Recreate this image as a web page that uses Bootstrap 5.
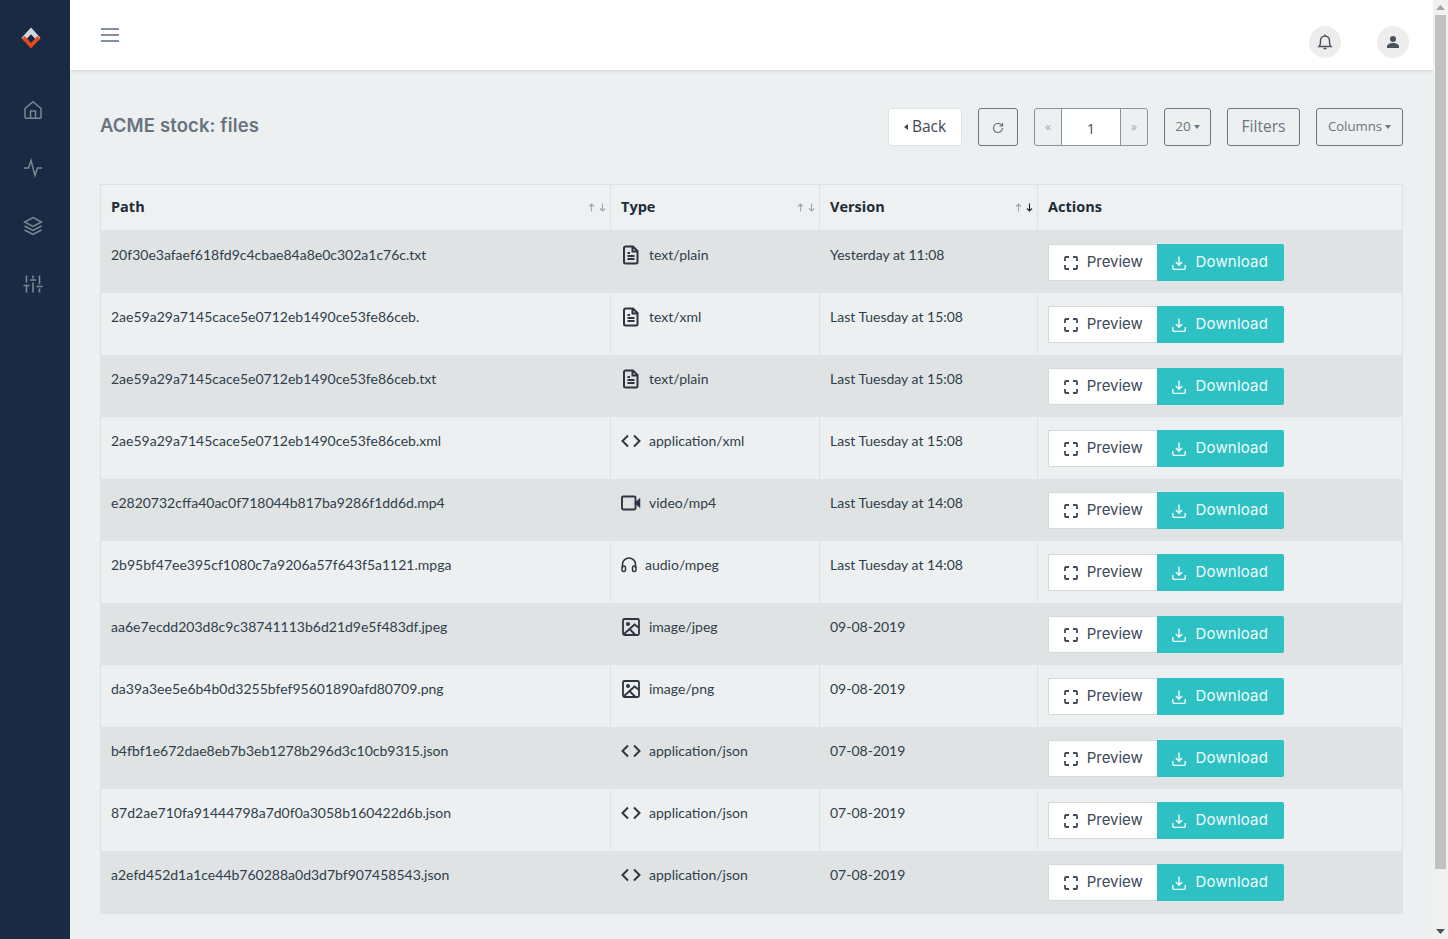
<!DOCTYPE html>
<html lang="en">
<head>
<meta charset="utf-8">
<title>ACME stock: files</title>
<link href="https://cdn.jsdelivr.net/npm/bootstrap@5.3.0/dist/css/bootstrap.min.css" rel="stylesheet">
<style>
html,body{height:100%;overflow:hidden}
body{background:#ecf0f1;font-family:"Lato","Liberation Sans",sans-serif;color:#2f3d4a;font-size:14px;margin:0}
.defs-holder{position:absolute;width:0;height:0}
.shell{height:939px}
.sidebar{width:70px;flex:0 0 70px;background:#1a2a44}
.brand{height:70px;padding:6px 9px 0 0}
.side-link{height:58px;color:#7d8795;padding-right:4px}
.side-links{padding-top:11px}
.topbar{height:70px;background:#fff;box-shadow:0 1px 3px rgba(60,70,80,.18);padding:0 24px 0 30px}
.burger{color:#5a6b7f;margin-top:26px}
.bar-btns{gap:36px;margin-top:26px}
.round-btn{width:32px;height:32px;border-radius:50%;background:#ededed;color:#49525e}
.page-body{padding:38px 30px 0 30px}
.page-title{font-family:"Inter","Open Sans",sans-serif;font-weight:600;font-size:18.5px;color:#69737f;margin:-4px 0 0;letter-spacing:.12px}
.tool-row{height:38px}
.tool{height:38px;border:1px solid #6c757d;border-radius:3px;background:transparent;color:#6c757d;font-family:"Open Sans",sans-serif;font-size:14px;padding:0;line-height:1}
.tool-back{width:74px;background:#fff;border-color:#dfe3e6;color:#3d4754;font-size:15.5px;margin-right:16px}
.tool-reload{width:40px;margin-right:16px}
.pager{width:114px;margin-right:16px;overflow:hidden;border-color:#8b939b}
.pager-arrow{width:26px;flex:none;color:#a1a8b0;font-size:12px}
.pager-num{width:60px;flex:none;background:#fff;color:#3d4754;border-left:1px solid #8b939b;border-right:1px solid #8b939b;font-size:14px;padding-top:3px}
.tool-size{width:47px;font-size:13.5px;margin-right:16px}
.tool-filters{width:73px;margin-right:16px;font-size:15.5px;padding-bottom:1px}
.tool-cols{width:87px;font-size:13.2px}
.caret-s{display:inline-block;margin-left:3px;vertical-align:2px;border-top:4px solid;border-left:3.5px solid transparent;border-right:3.5px solid transparent}
.caret-l{display:inline-block;margin-right:4px;vertical-align:2px;border-right:4px solid;border-top:3.5px solid transparent;border-bottom:3.5px solid transparent}
.files{margin:38px 0 0;width:1303px;table-layout:fixed;border-collapse:separate;border-spacing:0;--bs-table-bg:transparent;color:#2f3d4a}
.col-path{width:511px}.col-type{width:209px}.col-ver{width:218px}
.files th,.files td{border:0;border-right:1px solid #dde2e4;padding:0 10px;vertical-align:top;background:transparent;box-shadow:none}
.files tr>*:first-child{border-left:1px solid #dde2e4}
.files thead th{height:46px;border-top:1px solid #dde2e4;padding-bottom:2px;background:#edf1f2;font-family:"Open Sans",sans-serif;font-weight:700;font-size:14.5px;color:#212b36;vertical-align:middle;position:relative}
.files tbody tr{height:62px}
.files tbody tr:first-child,.files tbody tr:last-child{height:63px}
.files tbody tr:nth-child(odd) td{background:#dfe3e4;border-right-color:#dfe3e4;border-left-color:#dde2e4}
.files tbody tr:nth-child(even) td{background:#ecf0f1}
.files tbody td:last-child{border-right-color:#dde2e4!important}
.files tbody td{padding-top:15px;line-height:18px;font-size:14px;color:#303e4b}
.files tbody tr:first-child td{padding-top:16px}
.files tbody td.act{padding-top:13px}
.files tbody tr:first-child td.act{padding-top:14px}
.sort-marks{position:absolute;right:4px;top:18px;gap:4px;color:#9ea6ad}
.sort-on{color:#1c232b}
.type-ic{width:20px;height:20px;margin-right:8px;color:#2f3540;flex:none;margin-top:-1px}
.type-ic.hp{width:16px;height:16px;margin-top:1px}
.acts{width:236px;height:37px;font-family:"Inter","Open Sans",sans-serif}
.act-prev{width:109px;background:#fff;color:#3d4858;border:1px solid #d5d9dc;border-right:0;border-radius:2px 0 0 2px;padding:0;font-size:15px;letter-spacing:-.05px}
.act-down{width:127px;background:#2ec1c3;color:#f0fbfb;border:0;border-radius:0 2px 2px 0;padding:0;font-size:15px;letter-spacing:.18px}
.act-prev:hover{background:#fff;color:#3d4858}.act-down:hover{background:#2ec1c3;color:#f0fbfb}
.act-ic{width:14px;height:14px;margin:1px 1px 0 0;flex:none}
.fake-scroll{width:15px;flex:0 0 15px;background:#f1f1f1;padding:0 2px}
.scroll-arrow{height:15px;color:#a3a3a3}
.scroll-arrow.dn{color:#505050}
.scroll-thumb{height:854px;background:#c1c1c1}
</style>
</head>
<body>
<svg class="defs-holder" aria-hidden="true">
<defs>
<symbol id="doc" viewBox="0 0 20 20"><path d="M4.500 1.500h7.500l4.500 4.500v11a1.500 1.500 0 0 1-1.500 1.500h-10.500a1.500 1.500 0 0 1-1.500-1.500v-14a1.500 1.500 0 0 1 1.500-1.500zM11.500 1.500v5h5M6.500 8h2.500M6.500 11h7M6.500 14h7" fill="none" stroke="currentColor" stroke-width="2"/></symbol>
<symbol id="code" viewBox="0 0 20 20"><path d="M7 4.500l-5.500 5.500 5.500 5.500M13 4.500l5.500 5.500-5.500 5.500" fill="none" stroke="currentColor" stroke-width="2"/></symbol>
<symbol id="video" viewBox="0 0 20 20"><rect x="1" y="3.500" width="13.500" height="13" rx="1.200" fill="none" stroke="currentColor" stroke-width="1.900"/><path d="M14.500 10l4-3.500v7z" fill="currentColor" stroke="currentColor" stroke-width="1.500"/></symbol>
<symbol id="audio" viewBox="0 0 16 16"><path d="M1.500 11v-3.500a6.500 6.500 0 0 1 13 0v3.500" fill="none" stroke="currentColor" stroke-width="1.500"/><rect x="1" y="9" width="3.500" height="5.500" rx="1.500" fill="none" stroke="currentColor" stroke-width="1.500"/><rect x="11.500" y="9" width="3.500" height="5.500" rx="1.500" fill="none" stroke="currentColor" stroke-width="1.500"/></symbol>
<symbol id="image" viewBox="0 0 20 20"><rect x="2" y="2" width="16" height="16" rx="1.500" fill="none" stroke="currentColor" stroke-width="1.800"/><circle cx="7" cy="7" r="2" fill="currentColor"/><path d="M2.500 17.500l11-10 4 3M9 12.500l5 5" fill="none" stroke="currentColor" stroke-width="1.800"/></symbol>
<symbol id="frame" viewBox="0 0 14 14"><path d="M1 5v-3a1 1 0 0 1 1-1h3M9 1h3a1 1 0 0 1 1 1v3M13 9v3a1 1 0 0 1-1 1h-3M5 13h-3a1 1 0 0 1-1-1v-3" fill="none" stroke="currentColor" stroke-width="1.800"/></symbol>
<symbol id="dl" viewBox="0 0 14 14"><path d="M7 .5v8.500M3.800 6l3.200 3.200 3.200-3.200M.8 9v3a1.500 1.500 0 0 0 1.500 1.500h9.400a1.500 1.500 0 0 0 1.500-1.500v-3" fill="none" stroke="currentColor" stroke-width="1.400"/></symbol>
<symbol id="up" viewBox="0 0 7 9"><path d="M3.500 8.500v-7.500M1 3.500l2.500-2.500 2.500 2.500" fill="none" stroke="currentColor" stroke-width="1.100"/></symbol>
<symbol id="down" viewBox="0 0 7 9"><path d="M3.500 .5v7.500M1 5.500l2.500 2.500 2.500-2.500" fill="none" stroke="currentColor" stroke-width="1.100"/></symbol>
</defs>
</svg>
<div class="shell d-flex">
  <aside class="sidebar d-flex flex-column">
    <div class="brand d-flex align-items-center justify-content-center">
      <svg width="20" height="22" viewBox="0 0 22 22" preserveAspectRatio="none"><path d="M11 .5L21.500 11l-3.300 3.300L11 7.200 3.800 14.300.5 11z" fill="#d5d7da"/><path d="M1 11.500l10 10 10-10-3-2.500-7 7-7-7z" fill="#e8491d"/></svg>
    </div>
    <nav class="side-links d-flex flex-column">
      <a class="side-link d-flex align-items-center justify-content-center" href="#" aria-label="Home"><svg width="20" height="20" viewBox="0 0 20 20" fill="none" stroke="currentColor" stroke-width="1.500"><path d="M2 8.500L10 1.800l8 6.700v8.700a1 1 0 0 1-1 1H3a1 1 0 0 1-1-1z"/><path d="M7.500 18v-7h5v7"/></svg></a>
      <a class="side-link d-flex align-items-center justify-content-center" href="#" aria-label="Activity"><svg width="20" height="20" viewBox="0 0 20 20" fill="none" stroke="currentColor" stroke-width="1.500"><path d="M1 10h4.500l2.500-7.500 4 15 2.500-7.500H19"/></svg></a>
      <a class="side-link d-flex align-items-center justify-content-center" href="#" aria-label="Layers"><svg width="20" height="20" viewBox="0 0 20 20" fill="none" stroke="currentColor" stroke-width="1.500"><path d="M10 1.500l8.500 4.500-8.500 4.500L1.500 6zM1.500 10l8.500 4.500 8.500-4.500M1.500 14l8.500 4.500 8.500-4.500"/></svg></a>
      <a class="side-link d-flex align-items-center justify-content-center" href="#" aria-label="Settings"><svg width="20" height="20" viewBox="0 0 20 20" fill="none" stroke="currentColor" stroke-width="1.600"><path d="M3.500 1.500v7M3.500 12.500v6M10 1.500v3M10 8.500v10M16.500 1.500v9M16.500 14.500v4M.5 11.500h6M7 6h6M13.500 12.500h6"/></svg></a>
    </nav>
  </aside>
  <div class="flex-grow-1 min-w-0">
    <header class="topbar d-flex justify-content-between align-items-start">
      <svg class="burger" width="20" height="18" viewBox="0 0 20 18" stroke="currentColor" stroke-width="1.700" fill="none"><path d="M1 3h18M1 9h18M1 15h18"/></svg>
      <div class="bar-btns d-flex">
        <div class="round-btn d-flex align-items-center justify-content-center"><svg width="16" height="16" viewBox="0 0 16 16" fill="none" stroke="currentColor" stroke-width="1.400"><path d="M2 12.500h12c-1-1-1.500-2-1.500-4V6.500a4.500 4.500 0 0 0-9 0v2c0 2-.5 3-1.500 4z"/><path d="M8 .5v1.500M6.500 14.500h3" /></svg></div>
        <div class="round-btn d-flex align-items-center justify-content-center"><svg width="14" height="14" viewBox="0 0 14 14" fill="currentColor"><circle cx="7" cy="4" r="3"/><path d="M1 13v-1.500C1 9.500 4 8 7 8s6 1.500 6 3.500V13z"/></svg></div>
      </div>
    </header>
    <main class="page-body">
      <div class="tool-row d-flex align-items-center">
        <h1 class="page-title flex-grow-1">ACME stock: files</h1>
        <button class="tool tool-back"><span class="caret-l"></span>Back</button>
        <button class="tool tool-reload" aria-label="Reload"><svg width="12" height="12" viewBox="0 0 12 12" fill="none" stroke="currentColor" stroke-width="1.200"><path d="M10.500 6a4.500 4.500 0 1 1-1.300-3.200L10.500 4M10.500 1v3H7.500"/></svg></button>
        <div class="tool pager d-flex">
          <span class="pager-arrow d-flex align-items-center justify-content-center">«</span>
          <span class="pager-num d-flex align-items-center justify-content-center">1</span>
          <span class="pager-arrow d-flex align-items-center justify-content-center">»</span>
        </div>
        <button class="tool tool-size">20<span class="caret-s"></span></button>
        <button class="tool tool-filters">Filters</button>
        <button class="tool tool-cols">Columns<span class="caret-s"></span></button>
      </div>
      <table class="table files">
        <colgroup><col class="col-path"><col class="col-type"><col class="col-ver"><col></colgroup>
        <thead><tr>
          <th>Path<span class="sort-marks d-flex"><svg width="7" height="9"><use href="#up"/></svg><svg width="7" height="9"><use href="#down"/></svg></span></th>
          <th>Type<span class="sort-marks d-flex"><svg width="7" height="9"><use href="#up"/></svg><svg width="7" height="9"><use href="#down"/></svg></span></th>
          <th>Version<span class="sort-marks d-flex"><svg width="7" height="9"><use href="#up"/></svg><svg class="sort-on" width="7" height="9"><use href="#down"/></svg></span></th>
          <th>Actions</th>
        </tr></thead>
        <tbody>
<tr><td>20f30e3afaef618fd9c4cbae84a8e0c302a1c76c.txt</td><td><div class="d-flex"><svg class="type-ic"><use href="#doc"/></svg>text/plain</div></td><td>Yesterday at 11:08</td><td class="act"><div class="btn-group acts"><button class="btn act-prev d-flex align-items-center justify-content-center gap-2"><svg class="act-ic"><use href="#frame"/></svg>Preview</button><button class="btn act-down d-flex align-items-center justify-content-center gap-2"><svg class="act-ic"><use href="#dl"/></svg>Download</button></div></td></tr>
<tr><td>2ae59a29a7145cace5e0712eb1490ce53fe86ceb.</td><td><div class="d-flex"><svg class="type-ic"><use href="#doc"/></svg>text/xml</div></td><td>Last Tuesday at 15:08</td><td class="act"><div class="btn-group acts"><button class="btn act-prev d-flex align-items-center justify-content-center gap-2"><svg class="act-ic"><use href="#frame"/></svg>Preview</button><button class="btn act-down d-flex align-items-center justify-content-center gap-2"><svg class="act-ic"><use href="#dl"/></svg>Download</button></div></td></tr>
<tr><td>2ae59a29a7145cace5e0712eb1490ce53fe86ceb.txt</td><td><div class="d-flex"><svg class="type-ic"><use href="#doc"/></svg>text/plain</div></td><td>Last Tuesday at 15:08</td><td class="act"><div class="btn-group acts"><button class="btn act-prev d-flex align-items-center justify-content-center gap-2"><svg class="act-ic"><use href="#frame"/></svg>Preview</button><button class="btn act-down d-flex align-items-center justify-content-center gap-2"><svg class="act-ic"><use href="#dl"/></svg>Download</button></div></td></tr>
<tr><td>2ae59a29a7145cace5e0712eb1490ce53fe86ceb.xml</td><td><div class="d-flex"><svg class="type-ic"><use href="#code"/></svg>application/xml</div></td><td>Last Tuesday at 15:08</td><td class="act"><div class="btn-group acts"><button class="btn act-prev d-flex align-items-center justify-content-center gap-2"><svg class="act-ic"><use href="#frame"/></svg>Preview</button><button class="btn act-down d-flex align-items-center justify-content-center gap-2"><svg class="act-ic"><use href="#dl"/></svg>Download</button></div></td></tr>
<tr><td>e2820732cffa40ac0f718044b817ba9286f1dd6d.mp4</td><td><div class="d-flex"><svg class="type-ic"><use href="#video"/></svg>video/mp4</div></td><td>Last Tuesday at 14:08</td><td class="act"><div class="btn-group acts"><button class="btn act-prev d-flex align-items-center justify-content-center gap-2"><svg class="act-ic"><use href="#frame"/></svg>Preview</button><button class="btn act-down d-flex align-items-center justify-content-center gap-2"><svg class="act-ic"><use href="#dl"/></svg>Download</button></div></td></tr>
<tr><td>2b95bf47ee395cf1080c7a9206a57f643f5a1121.mpga</td><td><div class="d-flex"><svg class="type-ic hp"><use href="#audio"/></svg>audio/mpeg</div></td><td>Last Tuesday at 14:08</td><td class="act"><div class="btn-group acts"><button class="btn act-prev d-flex align-items-center justify-content-center gap-2"><svg class="act-ic"><use href="#frame"/></svg>Preview</button><button class="btn act-down d-flex align-items-center justify-content-center gap-2"><svg class="act-ic"><use href="#dl"/></svg>Download</button></div></td></tr>
<tr><td>aa6e7ecdd203d8c9c38741113b6d21d9e5f483df.jpeg</td><td><div class="d-flex"><svg class="type-ic"><use href="#image"/></svg>image/jpeg</div></td><td>09-08-2019</td><td class="act"><div class="btn-group acts"><button class="btn act-prev d-flex align-items-center justify-content-center gap-2"><svg class="act-ic"><use href="#frame"/></svg>Preview</button><button class="btn act-down d-flex align-items-center justify-content-center gap-2"><svg class="act-ic"><use href="#dl"/></svg>Download</button></div></td></tr>
<tr><td>da39a3ee5e6b4b0d3255bfef95601890afd80709.png</td><td><div class="d-flex"><svg class="type-ic"><use href="#image"/></svg>image/png</div></td><td>09-08-2019</td><td class="act"><div class="btn-group acts"><button class="btn act-prev d-flex align-items-center justify-content-center gap-2"><svg class="act-ic"><use href="#frame"/></svg>Preview</button><button class="btn act-down d-flex align-items-center justify-content-center gap-2"><svg class="act-ic"><use href="#dl"/></svg>Download</button></div></td></tr>
<tr><td>b4fbf1e672dae8eb7b3eb1278b296d3c10cb9315.json</td><td><div class="d-flex"><svg class="type-ic"><use href="#code"/></svg>application/json</div></td><td>07-08-2019</td><td class="act"><div class="btn-group acts"><button class="btn act-prev d-flex align-items-center justify-content-center gap-2"><svg class="act-ic"><use href="#frame"/></svg>Preview</button><button class="btn act-down d-flex align-items-center justify-content-center gap-2"><svg class="act-ic"><use href="#dl"/></svg>Download</button></div></td></tr>
<tr><td>87d2ae710fa91444798a7d0f0a3058b160422d6b.json</td><td><div class="d-flex"><svg class="type-ic"><use href="#code"/></svg>application/json</div></td><td>07-08-2019</td><td class="act"><div class="btn-group acts"><button class="btn act-prev d-flex align-items-center justify-content-center gap-2"><svg class="act-ic"><use href="#frame"/></svg>Preview</button><button class="btn act-down d-flex align-items-center justify-content-center gap-2"><svg class="act-ic"><use href="#dl"/></svg>Download</button></div></td></tr>
<tr><td>a2efd452d1a1ce44b760288a0d3d7bf907458543.json</td><td><div class="d-flex"><svg class="type-ic"><use href="#code"/></svg>application/json</div></td><td>07-08-2019</td><td class="act"><div class="btn-group acts"><button class="btn act-prev d-flex align-items-center justify-content-center gap-2"><svg class="act-ic"><use href="#frame"/></svg>Preview</button><button class="btn act-down d-flex align-items-center justify-content-center gap-2"><svg class="act-ic"><use href="#dl"/></svg>Download</button></div></td></tr>
        </tbody>
      </table>
    </main>
  </div>
  <div class="fake-scroll d-flex flex-column" aria-hidden="true">
    <div class="scroll-arrow d-flex align-items-center justify-content-center"><svg width="9" height="5" viewBox="0 0 9 5" fill="currentColor"><path d="M4.500 0L9 5H0z"/></svg></div>
    <div class="scroll-thumb"></div>
    <div class="flex-grow-1"></div>
    <div class="scroll-arrow dn d-flex align-items-center justify-content-center"><svg width="9" height="5" viewBox="0 0 9 5" fill="currentColor"><path d="M0 0h9L4.500 5z"/></svg></div>
  </div>
</div>
<script src="https://cdn.jsdelivr.net/npm/bootstrap@5.3.0/dist/js/bootstrap.bundle.min.js"></script>
</body>
</html>
